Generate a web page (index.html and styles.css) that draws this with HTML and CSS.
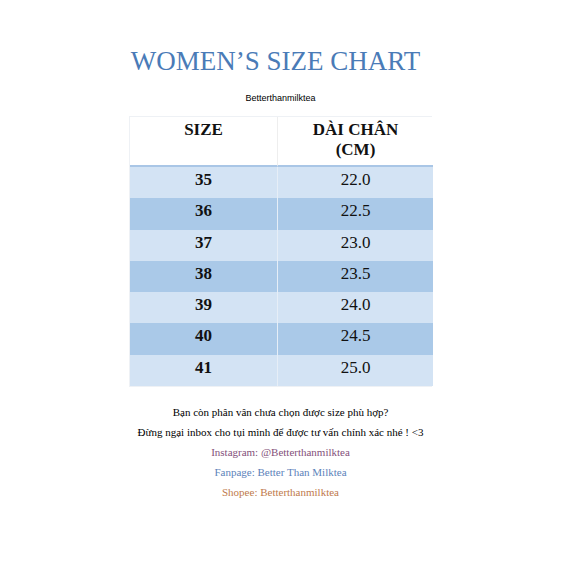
FILE: index.html
```html
<!DOCTYPE html>
<html lang="vi">
<head>
<meta charset="utf-8">
<title>Women's Size Chart</title>
<link rel="stylesheet" href="styles.css">
</head>
<body>
<main class="page">
  <h1 class="title">WOMEN’S SIZE CHART</h1>
  <p class="brand">Betterthanmilktea</p>
  <div class="chart">
    <div class="cell head">SIZE</div>
    <div class="cell head">DÀI CHÂN<br>(CM)</div>
    <div class="cell light num">35</div><div class="cell light">22.0</div>
    <div class="cell dark num">36</div><div class="cell dark">22.5</div>
    <div class="cell light num">37</div><div class="cell light">23.0</div>
    <div class="cell dark num">38</div><div class="cell dark">23.5</div>
    <div class="cell light num">39</div><div class="cell light">24.0</div>
    <div class="cell dark num">40</div><div class="cell dark">24.5</div>
    <div class="cell light num">41</div><div class="cell light">25.0</div>
  </div>
  <div class="notes">
    <p>Bạn còn phân vân chưa chọn được size phù hợp?</p>
    <p>Đừng ngại inbox cho tụi mình để được tư vấn chính xác nhé ! &lt;3</p>
    <p class="insta">Instagram: @Betterthanmilktea</p>
    <p class="fanpage">Fanpage: Better Than Milktea</p>
    <p class="shopee">Shopee: Betterthanmilktea</p>
  </div>
</main>
</body>
</html>
```

FILE: styles.css
```css
html, body {
  margin: 0;
  padding: 0;
  background: #ffffff;
}

.page {
  width: 561px;
  padding-top: 45px;
  display: flex;
  flex-direction: column;
  align-items: center;
  font-family: "Liberation Serif", "Times New Roman", serif;
  color: #111;
}

.title {
  margin: 0;
  padding-right: 10px;
  font-weight: normal;
  font-size: 27px;
  line-height: 32px;
  color: #4a7bb7;
}

.brand {
  margin: 15px 0 0;
  font-family: "Liberation Sans", Arial, sans-serif;
  font-size: 9px;
  line-height: 12px;
  color: #000;
}

.chart {
  margin-top: 12px;
  width: 303px;
  display: grid;
  grid-template-columns: 148px 155px;
  grid-template-rows: 50px repeat(7, 31.3px);
  border: 1px solid #eef1f5;
  box-sizing: border-box;
}

.cell {
  display: flex;
  justify-content: center;
  align-items: flex-start;
  text-align: center;
  font-size: 17px;
  line-height: 20px;
  padding-top: 3px;
  box-sizing: border-box;
  color: #111;
}

.cell:nth-child(odd) {
  border-right: 1px solid #e6eef7;
}

.head {
  font-weight: bold;
  background: #ffffff;
  border-bottom: 2px solid #a9c6e6;
}

.head:first-child {
  border-right: 1px solid #eeeeee;
}

.num {
  font-weight: bold;
}

.light {
  background: #d3e3f4;
}

.dark {
  background: #aac9e8;
}

.notes {
  margin-top: 15px;
  text-align: center;
  font-family: "Liberation Serif", "Times New Roman", serif;
  font-size: 11px;
  line-height: 20px;
  color: #000;
}

.notes p {
  margin: 0;
}

.insta {
  color: #84507a;
}

.fanpage {
  color: #5c82ba;
}

.shopee {
  color: #c07a4c;
}
```
